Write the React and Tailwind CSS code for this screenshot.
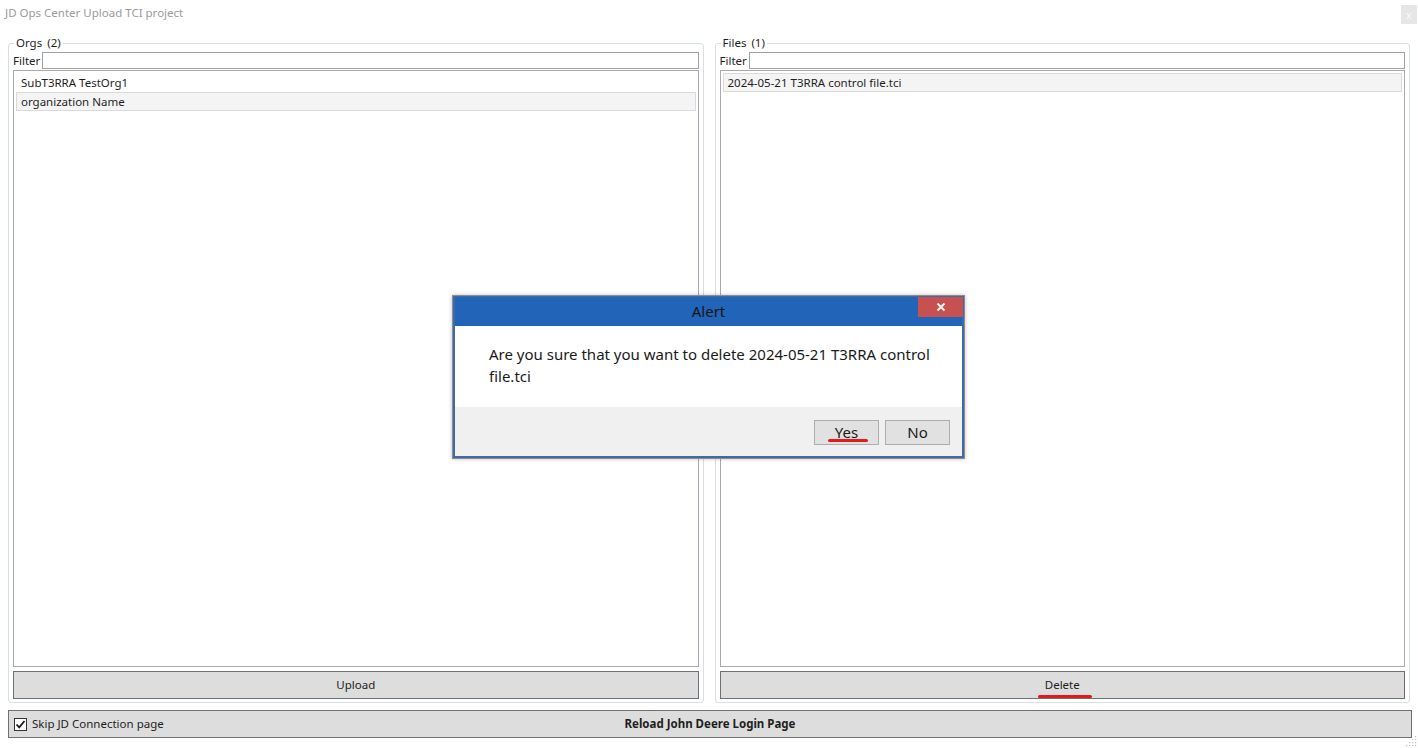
import React from 'react';

const font = { fontFamily: '"Noto Sans", "Open Sans", Arial, sans-serif' };

const GroupBox = ({ title, count, items, selected, action, actionMark }) => (
  <fieldset className="flex-1 h-[668px] min-w-0 border border-[#d5dfe5] rounded-[3px] px-[4px] pb-[3px] flex flex-col">
    <legend className="ml-[1px] px-[2px] text-[11.5px] leading-[16px] text-[#1e1e1e]">
      {title} <span className="ml-[2px]">({count})</span>
    </legend>
    {/* Filter row */}
    <div className="mt-[1px] flex items-center h-[17px]">
      <span className="text-[11.5px] leading-[16px] text-[#1e1e1e] pr-[2px]">Filter</span>
      <input
        type="text"
        className="flex-1 h-[17px] border border-[#a0a0a0] bg-white outline-none"
      />
    </div>
    {/* List */}
    <div className="mt-[1px] flex-1 border border-[#a9a9a9] bg-white p-[2px]">
      {items.map((item, i) => (
        <div
          key={item}
          className={`h-[19px] pl-[4px] flex items-center text-[11.5px] text-[#1e1e1e] border ${
            i === selected ? 'bg-[#f4f4f4] border-[#dadada]' : 'border-transparent'
          }`}
        >
          {item}
        </div>
      ))}
    </div>
    {/* Action button */}
    <button
      type="button"
      className="mt-[4px] h-[28px] bg-[#dddddd] border border-[#707070] text-[11.5px] text-[#1e1e1e] flex items-center justify-center"
    >
      <span className="relative">
        {action}
        {actionMark && (
          <span className="absolute left-[-7px] right-[-12px] top-[19px] h-[3px] rounded-full bg-[#e01b1b]" />
        )}
      </span>
    </button>
  </fieldset>
);

const ResizeGrip = () => (
  <svg width="12" height="12" viewBox="0 0 12 12" className="absolute right-[1px] bottom-[1px]">
    {[
      [10, 2], [10, 5], [7, 5], [10, 8], [7, 8], [4, 8], [10, 11], [7, 11], [4, 11], [1, 11],
    ].map(([x, y]) => (
      <rect key={`${x}-${y}`} x={x} y={y - 1} width="1.2" height="1.2" fill="#b8bfc8" />
    ))}
  </svg>
);

const AlertDialog = () => (
  <div className="absolute left-[452px] top-[295px] w-[513px] h-[164px] border border-[#8d8d8d] shadow-[0_0_4px_rgba(0,0,0,0.25)]">
    <div className="w-full h-full border-2 border-t-[1px] border-[#3f6aa3] flex flex-col bg-white">
      {/* Title bar */}
      <div className="relative h-[29px] bg-[#2264b7] flex items-center justify-center">
        <span className="text-[15px] text-[#161616]">Alert</span>
        <div className="absolute right-[-1px] top-0 w-[45px] h-[20px] bg-[#c75050] flex items-center justify-center">
          <svg width="10" height="10" viewBox="0 0 10 10">
            <path d="M1.5 1.5 L8.5 8.5 M8.5 1.5 L1.5 8.5" stroke="#ffffff" strokeWidth="1.8" />
          </svg>
        </div>
      </div>
      {/* Message */}
      <div className="h-[81px] pl-[34px] pr-[20px] pt-[17px] text-[15px] leading-[22px] text-[#1a1a1a]">
        Are you sure that you want to delete 2024-05-21 T3RRA control file.tci
      </div>
      {/* Buttons */}
      <div className="flex-1 bg-[#f0f0f0] flex justify-end items-start pt-[13px] pr-[12px] gap-[6px]">
        <button
          type="button"
          className="w-[65px] h-[25px] bg-[#e1e1e1] border border-[#adadad] text-[15px] text-[#1a1a1a] flex items-center justify-center"
        >
          <span className="relative">
            Yes
            <span className="absolute left-[-7px] right-[-10px] top-[18px] h-[3px] rounded-full bg-[#e01b1b]" />
          </span>
        </button>
        <button
          type="button"
          className="w-[65px] h-[25px] bg-[#e1e1e1] border border-[#adadad] text-[15px] text-[#1a1a1a] flex items-center justify-center"
        >
          No
        </button>
      </div>
    </div>
  </div>
);

export default function App() {
  return (
    <div className="relative w-[1418px] h-[748px] bg-white overflow-hidden" style={font}>
      {/* Window title */}
      <div className="h-[35px] flex items-start justify-between">
        <span className="ml-[5px] mt-[5px] text-[11.5px] leading-[16px] text-[#9a9a9a]">
          JD Ops Center Upload TCI project
        </span>
        <div className="mt-[5px] mr-[1px] w-[16px] h-[19px] bg-[#e6e6e6] flex items-center justify-center">
          <span className="text-[10px] leading-none text-[#fafafa]">x</span>
        </div>
      </div>

      {/* Panels */}
      <div className="flex gap-[11px] pl-[8px] pr-[8px]">
        <GroupBox
          title="Orgs"
          count={2}
          items={['SubT3RRA TestOrg1', 'organization Name']}
          selected={1}
          action="Upload"
        />
        <GroupBox
          title="Files"
          count={1}
          items={['2024-05-21 T3RRA control file.tci']}
          selected={0}
          action="Delete"
          actionMark
        />
      </div>

      {/* Bottom bar */}
      <div className="relative mt-[7px] ml-[8px] w-[1404px] h-[28px] bg-[#dddddd] border border-[#707070] flex items-center">
        <div className="flex items-center pl-[5px]">
          <div className="w-[13px] h-[13px] border border-[#333333] bg-white flex items-center justify-center">
            <svg width="11" height="11" viewBox="0 0 11 11">
              <path d="M1.5 5.5 L4.2 8.3 L9.5 2" fill="none" stroke="#1a1a1a" strokeWidth="1.8" />
            </svg>
          </div>
          <span className="ml-[5px] text-[11.5px] text-[#1e1e1e]">Skip JD Connection page</span>
        </div>
        <span className="absolute left-0 right-0 text-center text-[11.5px] font-bold text-[#1e1e1e] pointer-events-none">
          Reload John Deere Login Page
        </span>
      </div>

      <ResizeGrip />
      <AlertDialog />
    </div>
  );
}
